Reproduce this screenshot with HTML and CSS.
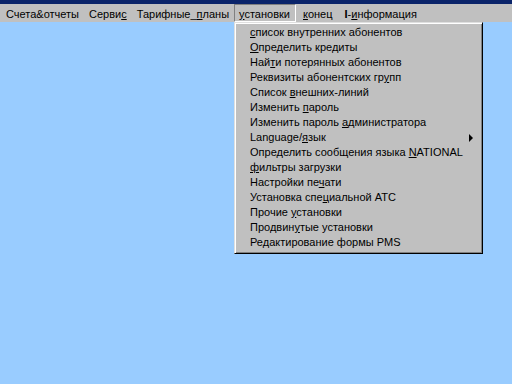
FILE: index.html
```html
<!DOCTYPE html>
<html lang="ru">
<head>
  <meta charset="UTF-8">
  <title>установки</title>
  <link rel="stylesheet" href="styles.css">
</head>
<body>
  <div class="titlebar"></div>

  <div class="menubar">
    <span class="menu-item">Счета&amp;отчеты</span>
    <span class="menu-item">Серви<u>с</u></span>
    <span class="menu-item">Тарифные_<u>п</u>ланы</span>
    <span class="menu-item open"><u>у</u>становки</span>
    <span class="menu-item wide"><u>к</u>онец</span>
    <span class="menu-item wide"><b>I</b>-<u>и</u>нформация</span>

    <ul class="dropdown">
      <li><u>с</u>писок внутренних абонентов</li>
      <li><u>О</u>пределить кредиты</li>
      <li>Най<u>т</u>и потерянных абонентов</li>
      <li>Реквизиты абонентских гр<u>у</u>пп</li>
      <li>Список <u>в</u>нешних-линий</li>
      <li>Изменить <u>п</u>ароль</li>
      <li>Изменить пароль <u>а</u>дминистратора</li>
      <li class="sub">Language/<u>я</u>зык</li>
      <li>Определить сообщения языка <u>N</u>ATIONAL</li>
      <li><u>ф</u>ильтры загрузки</li>
      <li>Настройки пе<u>ч</u>ати</li>
      <li>Установка спе<u>ц</u>иальной АТС</li>
      <li>Прочие <u>у</u>становки</li>
      <li>Продвин<u>у</u>тые установки</li>
      <li>Редактирование формы PMS</li>
    </ul>
  </div>
</body>
</html>
```

FILE: styles.css
```css
body {
  margin: 0;
  background-color: #99ccff;
  font-family: "Liberation Sans", Arial, sans-serif;
  font-size: 11px;
  color: #000000;
  height: 384px;
  overflow: hidden;
}

.titlebar {
  height: 4px;
  background-color: #0a246a;
}

.menubar {
  position: relative;
  display: flex;
  height: 18px;
  padding-left: 1px;
  background-color: #c0c0c0;
}

.menu-item {
  box-sizing: border-box;
  height: 18px;
  line-height: 16px;
  padding: 1px 4px 0 4px;
  white-space: nowrap;
  border: 1px solid transparent;
}

.menu-item.open {
  padding-right: 5px;
  border-color: #808080 #ffffff #ffffff #808080;
}

.menu-item.wide {
  padding-left: 6px;
}

.menu-item b {
  font-weight: bold;
}

.dropdown {
  position: absolute;
  left: 234px;
  top: 18px;
  width: 249px;
  box-sizing: border-box;
  margin: 0;
  padding: 2px 0 3px 0;
  list-style: none;
  background-color: #c0c0c0;
  border-top: 1px solid #dfdfdf;
  border-left: 1px solid #dfdfdf;
  border-right: 1px solid #000000;
  border-bottom: 1px solid #000000;
  box-shadow: inset 1px 1px 0 #ffffff, inset -1px -1px 0 #808080;
}

.dropdown li {
  position: relative;
  height: 15px;
  line-height: 15px;
  padding-left: 15px;
  white-space: nowrap;
}

.dropdown li.sub::after {
  content: "";
  position: absolute;
  right: 9px;
  top: 4px;
  border-left: 4px solid #000000;
  border-top: 4px solid transparent;
  border-bottom: 4px solid transparent;
}
```
